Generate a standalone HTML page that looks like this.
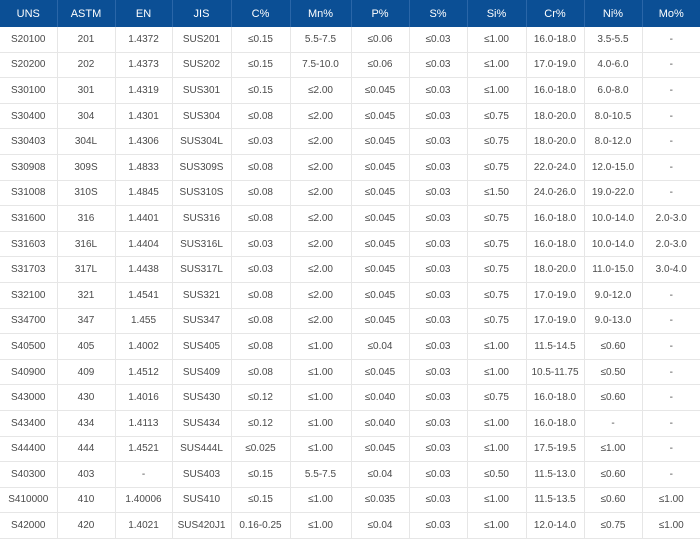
<!DOCTYPE html>
<html><head><meta charset="utf-8"><style>
html,body{margin:0;padding:0;background:#fff;}
table{border-collapse:collapse;width:700px;table-layout:fixed;font-family:"Liberation Sans",sans-serif;font-size:10px;color:#4a4a4a;}
th{background:#0b4f95;color:#fff;font-weight:normal;height:27px;padding:0;text-align:center;border-right:1px solid #2a66a8;font-size:11px;}
td{height:24.6px;padding:0;text-align:center;border:1px solid #e6e6e6;border-top:none;}
td:first-child{border-left:none}
td:last-child,th:last-child{border-right:none}
</style></head><body>
<table>
<colgroup><col style="width:57px"><col style="width:58px"><col style="width:57px"><col style="width:59px"><col style="width:59px"><col style="width:61px"><col style="width:58px"><col style="width:58px"><col style="width:59px"><col style="width:58px"><col style="width:58px"><col style="width:58px"></colgroup>
<tr><th>UNS</th><th>ASTM</th><th>EN</th><th>JIS</th><th>C%</th><th>Mn%</th><th>P%</th><th>S%</th><th>Si%</th><th>Cr%</th><th>Ni%</th><th>Mo%</th></tr>
<tr><td>S20100</td><td>201</td><td>1.4372</td><td>SUS201</td><td>≤0.15</td><td>5.5-7.5</td><td>≤0.06</td><td>≤0.03</td><td>≤1.00</td><td>16.0-18.0</td><td>3.5-5.5</td><td>-</td></tr>
<tr><td>S20200</td><td>202</td><td>1.4373</td><td>SUS202</td><td>≤0.15</td><td>7.5-10.0</td><td>≤0.06</td><td>≤0.03</td><td>≤1.00</td><td>17.0-19.0</td><td>4.0-6.0</td><td>-</td></tr>
<tr><td>S30100</td><td>301</td><td>1.4319</td><td>SUS301</td><td>≤0.15</td><td>≤2.00</td><td>≤0.045</td><td>≤0.03</td><td>≤1.00</td><td>16.0-18.0</td><td>6.0-8.0</td><td>-</td></tr>
<tr><td>S30400</td><td>304</td><td>1.4301</td><td>SUS304</td><td>≤0.08</td><td>≤2.00</td><td>≤0.045</td><td>≤0.03</td><td>≤0.75</td><td>18.0-20.0</td><td>8.0-10.5</td><td>-</td></tr>
<tr><td>S30403</td><td>304L</td><td>1.4306</td><td>SUS304L</td><td>≤0.03</td><td>≤2.00</td><td>≤0.045</td><td>≤0.03</td><td>≤0.75</td><td>18.0-20.0</td><td>8.0-12.0</td><td>-</td></tr>
<tr><td>S30908</td><td>309S</td><td>1.4833</td><td>SUS309S</td><td>≤0.08</td><td>≤2.00</td><td>≤0.045</td><td>≤0.03</td><td>≤0.75</td><td>22.0-24.0</td><td>12.0-15.0</td><td>-</td></tr>
<tr><td>S31008</td><td>310S</td><td>1.4845</td><td>SUS310S</td><td>≤0.08</td><td>≤2.00</td><td>≤0.045</td><td>≤0.03</td><td>≤1.50</td><td>24.0-26.0</td><td>19.0-22.0</td><td>-</td></tr>
<tr><td>S31600</td><td>316</td><td>1.4401</td><td>SUS316</td><td>≤0.08</td><td>≤2.00</td><td>≤0.045</td><td>≤0.03</td><td>≤0.75</td><td>16.0-18.0</td><td>10.0-14.0</td><td>2.0-3.0</td></tr>
<tr><td>S31603</td><td>316L</td><td>1.4404</td><td>SUS316L</td><td>≤0.03</td><td>≤2.00</td><td>≤0.045</td><td>≤0.03</td><td>≤0.75</td><td>16.0-18.0</td><td>10.0-14.0</td><td>2.0-3.0</td></tr>
<tr><td>S31703</td><td>317L</td><td>1.4438</td><td>SUS317L</td><td>≤0.03</td><td>≤2.00</td><td>≤0.045</td><td>≤0.03</td><td>≤0.75</td><td>18.0-20.0</td><td>11.0-15.0</td><td>3.0-4.0</td></tr>
<tr><td>S32100</td><td>321</td><td>1.4541</td><td>SUS321</td><td>≤0.08</td><td>≤2.00</td><td>≤0.045</td><td>≤0.03</td><td>≤0.75</td><td>17.0-19.0</td><td>9.0-12.0</td><td>-</td></tr>
<tr><td>S34700</td><td>347</td><td>1.455</td><td>SUS347</td><td>≤0.08</td><td>≤2.00</td><td>≤0.045</td><td>≤0.03</td><td>≤0.75</td><td>17.0-19.0</td><td>9.0-13.0</td><td>-</td></tr>
<tr><td>S40500</td><td>405</td><td>1.4002</td><td>SUS405</td><td>≤0.08</td><td>≤1.00</td><td>≤0.04</td><td>≤0.03</td><td>≤1.00</td><td>11.5-14.5</td><td>≤0.60</td><td>-</td></tr>
<tr><td>S40900</td><td>409</td><td>1.4512</td><td>SUS409</td><td>≤0.08</td><td>≤1.00</td><td>≤0.045</td><td>≤0.03</td><td>≤1.00</td><td>10.5-11.75</td><td>≤0.50</td><td>-</td></tr>
<tr><td>S43000</td><td>430</td><td>1.4016</td><td>SUS430</td><td>≤0.12</td><td>≤1.00</td><td>≤0.040</td><td>≤0.03</td><td>≤0.75</td><td>16.0-18.0</td><td>≤0.60</td><td>-</td></tr>
<tr><td>S43400</td><td>434</td><td>1.4113</td><td>SUS434</td><td>≤0.12</td><td>≤1.00</td><td>≤0.040</td><td>≤0.03</td><td>≤1.00</td><td>16.0-18.0</td><td>-</td><td>-</td></tr>
<tr><td>S44400</td><td>444</td><td>1.4521</td><td>SUS444L</td><td>≤0.025</td><td>≤1.00</td><td>≤0.045</td><td>≤0.03</td><td>≤1.00</td><td>17.5-19.5</td><td>≤1.00</td><td>-</td></tr>
<tr><td>S40300</td><td>403</td><td>-</td><td>SUS403</td><td>≤0.15</td><td>5.5-7.5</td><td>≤0.04</td><td>≤0.03</td><td>≤0.50</td><td>11.5-13.0</td><td>≤0.60</td><td>-</td></tr>
<tr><td>S410000</td><td>410</td><td>1.40006</td><td>SUS410</td><td>≤0.15</td><td>≤1.00</td><td>≤0.035</td><td>≤0.03</td><td>≤1.00</td><td>11.5-13.5</td><td>≤0.60</td><td>≤1.00</td></tr>
<tr><td>S42000</td><td>420</td><td>1.4021</td><td>SUS420J1</td><td>0.16-0.25</td><td>≤1.00</td><td>≤0.04</td><td>≤0.03</td><td>≤1.00</td><td>12.0-14.0</td><td>≤0.75</td><td>≤1.00</td></tr>
</table>
</body></html>
